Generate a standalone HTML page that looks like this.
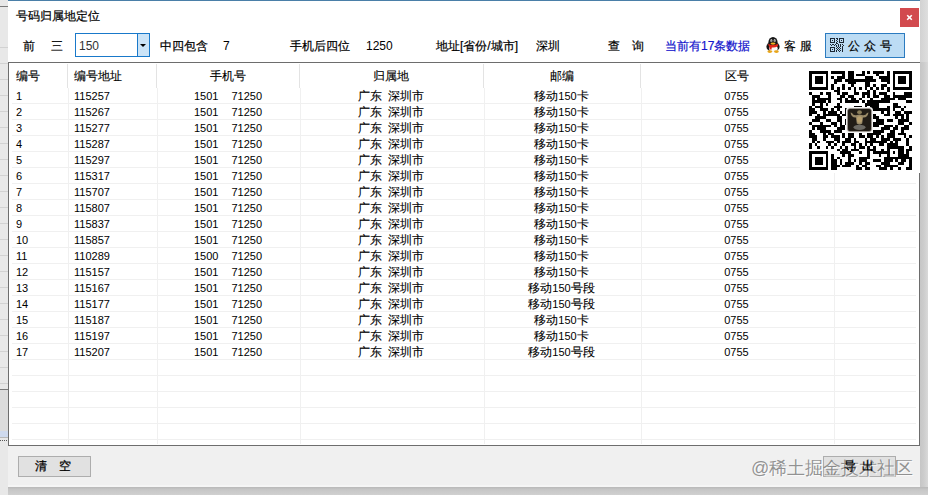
<!DOCTYPE html>
<html><head><meta charset="utf-8"><style>
*{margin:0;padding:0;box-sizing:border-box}
html,body{width:928px;height:495px;overflow:hidden;background:#e6e6e6;font-family:"Liberation Sans",sans-serif;color:#000}
.abs{position:absolute}
#strip{position:absolute;left:0;top:0;width:8px;height:495px;background:#e8e8e8}
#shadowR{position:absolute;left:920px;top:0;width:8px;height:495px;background:linear-gradient(to right,#c6c6c6,#cdcdcd 50%,#d9d9d9)}
#shadowRT{position:absolute;left:920px;top:0;width:8px;height:62px;background:linear-gradient(to right,#d2d2d2,#dedede)}
#shadowB{position:absolute;left:8px;top:487px;width:920px;height:8px;background:linear-gradient(to bottom,#b8b8b8,#c6c6c6 30%,#d0d0d0)}
#bband{position:absolute;left:8px;top:485px;width:912px;height:2px;background:#f5f5f5}
#win{position:absolute;left:8px;top:0;width:912px;height:487px;background:#f0f0f0}
#topw{position:absolute;left:8px;top:0;width:912px;height:62px;background:#fff;border-top:1px solid #4a7fa8}
.t{position:absolute;font-size:12px;line-height:14px;white-space:nowrap;-webkit-text-stroke:0.2px currentColor}
#table{position:absolute;left:8px;top:62px;width:912px;height:384px;background:#fff;border:1px solid #6d6d6d}
.hl{position:absolute;left:12px;width:904px;height:1px;background:#f0f0f0}
.vl{position:absolute;width:1px;background:#f0f0f0;top:88px;height:356px}
.hv{position:absolute;width:1px;background:#e3e3e3;top:64px;height:24px}
.h{position:absolute;top:69px;font-size:12px;line-height:14px;white-space:nowrap;-webkit-text-stroke:0.12px #000}
.r{position:absolute;left:0;width:928px;height:16px;font-size:11px;line-height:16px;white-space:nowrap}
.r span{position:absolute;top:0}
.c0{left:16px} .c1{left:74px}
.c2{left:157px;width:142px;text-align:center} .c2 i{display:inline-block;width:13px}
.c3{left:299px;width:184px;text-align:center;font-size:12px;-webkit-text-stroke:0.1px #000} .c3 b{display:inline-block;width:6px} .c4 em{font-style:normal;font-size:11px}
.c4{left:483px;width:157px;text-align:center;font-size:12px;-webkit-text-stroke:0.1px #000} .c4 em{-webkit-text-stroke:0}
.c5{left:640px;width:193px;text-align:center}
.btn{position:absolute;background:#e1e1e1;border:1px solid #adadad;font-size:12px;line-height:19px;text-align:center;-webkit-text-stroke:0.25px #000}
</style></head><body>
<div id="strip"></div>
<div class="abs" style="left:0;top:47px;width:8px;height:1px;background:#d2d2d2"></div><div class="abs" style="left:0;top:63px;width:8px;height:1px;background:#d2d2d2"></div><div class="abs" style="left:0;top:79px;width:8px;height:1px;background:#d2d2d2"></div><div class="abs" style="left:0;top:95px;width:8px;height:1px;background:#d2d2d2"></div><div class="abs" style="left:0;top:111px;width:8px;height:1px;background:#d2d2d2"></div><div class="abs" style="left:0;top:127px;width:8px;height:1px;background:#d2d2d2"></div><div class="abs" style="left:0;top:143px;width:8px;height:1px;background:#d2d2d2"></div><div class="abs" style="left:0;top:159px;width:8px;height:1px;background:#d2d2d2"></div><div class="abs" style="left:0;top:175px;width:8px;height:1px;background:#d2d2d2"></div><div class="abs" style="left:0;top:191px;width:8px;height:1px;background:#d2d2d2"></div><div class="abs" style="left:0;top:207px;width:8px;height:1px;background:#d2d2d2"></div><div class="abs" style="left:0;top:223px;width:8px;height:1px;background:#d2d2d2"></div><div class="abs" style="left:0;top:239px;width:8px;height:1px;background:#d2d2d2"></div><div class="abs" style="left:0;top:255px;width:8px;height:1px;background:#d2d2d2"></div><div class="abs" style="left:0;top:271px;width:8px;height:1px;background:#d2d2d2"></div><div class="abs" style="left:0;top:287px;width:8px;height:1px;background:#d2d2d2"></div><div class="abs" style="left:0;top:303px;width:8px;height:1px;background:#d2d2d2"></div><div class="abs" style="left:0;top:319px;width:8px;height:1px;background:#d2d2d2"></div><div class="abs" style="left:0;top:335px;width:8px;height:1px;background:#d2d2d2"></div><div class="abs" style="left:0;top:351px;width:8px;height:1px;background:#d2d2d2"></div><div class="abs" style="left:0;top:367px;width:8px;height:1px;background:#d2d2d2"></div><div class="abs" style="left:0;top:383px;width:8px;height:1px;background:#d2d2d2"></div><div class="abs" style="left:0;top:6px;width:8px;height:1px;background:#7a7a7a"></div><div class="abs" style="left:0;top:389px;width:8px;height:1px;background:#7a7a7a"></div><div class="abs" style="left:0;top:390px;width:8px;height:41px;background:#dcdcdc"></div>
<div class="abs" style="left:0;top:431px;width:8px;height:6px;background:#cfdaee"></div><div class="abs" style="left:0;top:437px;width:8px;height:1px;background:#b8b8b8"></div>
<div class="abs" style="left:0;top:440px;width:8px;height:1px;background:repeating-linear-gradient(to right,#555 0 1px,transparent 1px 2px)"></div>
<div id="shadowR"></div><div id="shadowRT"></div>
<div id="shadowB"></div>
<div id="win"></div><div id="bband"></div>
<div id="topw"></div>
<div class="t" style="left:16px;top:9px">号码归属地定位</div>
<div class="abs" style="left:900px;top:8px;width:19px;height:19px;background:#d24a4e"></div><svg class="abs" style="left:906px;top:14px" width="7" height="7" viewBox="0 0 7 7"><path d="M1.2 1.2L5.8 5.8M5.8 1.2L1.2 5.8" stroke="#fff" stroke-width="1.6"/></svg>
<div class="t" style="left:23px;top:39px">前</div>
<div class="t" style="left:51px;top:39px">三</div>
<div class="abs" style="left:75px;top:33px;width:75px;height:24px;border:1px solid #1979ca;background:#fff"></div>
<div class="t" style="left:79px;top:39px;color:#333;-webkit-text-stroke:0">150</div>
<div class="abs" style="left:137px;top:34px;width:12px;height:22px;background:#cce4f7;border-left:1px solid #1979ca"></div>
<div class="abs" style="left:140px;top:44px;width:0;height:0;border-left:3px solid transparent;border-right:3px solid transparent;border-top:3px solid #000"></div>
<div class="t" style="left:160px;top:39px">中四包含</div>
<div class="t" style="left:223px;top:39px;-webkit-text-stroke:0">7</div>
<div class="t" style="left:290px;top:39px">手机后四位</div>
<div class="t" style="left:366px;top:39px;-webkit-text-stroke:0">1250</div>
<div class="t" style="left:436px;top:39px">地址[省份/城市]</div>
<div class="t" style="left:536px;top:39px">深圳</div>
<div class="t" style="left:608px;top:39px;letter-spacing:12px">查询</div>
<div class="t" style="left:665px;top:39px;color:#1414cc">当前有17条数据</div>
<svg class="abs" style="left:766px;top:37px" width="14" height="16" viewBox="0 0 14 16"><ellipse cx="7" cy="9.8" rx="6.6" ry="5" fill="#161616"/><ellipse cx="7" cy="5.2" rx="4.6" ry="5.2" fill="#161616"/><ellipse cx="5.4" cy="3.7" rx="1" ry="1.4" fill="#f4f4f4"/><ellipse cx="8.6" cy="3.7" rx="1" ry="1.4" fill="#f4f4f4"/><ellipse cx="5.7" cy="4" rx="0.45" ry="0.7" fill="#222"/><ellipse cx="8.3" cy="4" rx="0.45" ry="0.7" fill="#222"/><ellipse cx="7.4" cy="11.6" rx="4.3" ry="3.4" fill="#fafafa"/><path d="M2.2 6.8 Q7 9.4 11.8 6.8 L12 9.2 Q8.5 11 5.8 10.4 L5.4 12.8 L3.6 12.2 L3.4 9.8 Q2.4 9 2.2 6.8z" fill="#e0261a"/><ellipse cx="7" cy="6.6" rx="2.5" ry="1.1" fill="#f0b020"/><ellipse cx="3.8" cy="14.6" rx="2.4" ry="1.3" fill="#e9a619"/><ellipse cx="10.4" cy="14.6" rx="2.4" ry="1.3" fill="#e9a619"/></svg>
<div class="t" style="left:784px;top:39px;letter-spacing:4px">客服</div>
<div class="abs" style="left:825px;top:33px;width:80px;height:25px;border:1px solid #2b7bc0;background:#bcdcf4"></div>
<svg class="abs" style="left:830px;top:38px" width="14" height="14" viewBox="0 0 14 14" shape-rendering="crispEdges"><path d="M0 0h1v1h-1zM1 0h1v1h-1zM2 0h1v1h-1zM3 0h1v1h-1zM4 0h1v1h-1zM6 0h1v1h-1zM7 0h1v1h-1zM9 0h1v1h-1zM10 0h1v1h-1zM11 0h1v1h-1zM12 0h1v1h-1zM13 0h1v1h-1zM0 1h1v1h-1zM4 1h1v1h-1zM7 1h1v1h-1zM9 1h1v1h-1zM13 1h1v1h-1zM0 2h1v1h-1zM2 2h1v1h-1zM4 2h1v1h-1zM6 2h1v1h-1zM9 2h1v1h-1zM11 2h1v1h-1zM13 2h1v1h-1zM0 3h1v1h-1zM4 3h1v1h-1zM7 3h1v1h-1zM9 3h1v1h-1zM13 3h1v1h-1zM0 4h1v1h-1zM1 4h1v1h-1zM2 4h1v1h-1zM3 4h1v1h-1zM4 4h1v1h-1zM6 4h1v1h-1zM9 4h1v1h-1zM10 4h1v1h-1zM11 4h1v1h-1zM12 4h1v1h-1zM13 4h1v1h-1zM6 5h1v1h-1zM7 5h1v1h-1zM0 6h1v1h-1zM2 6h1v1h-1zM3 6h1v1h-1zM5 6h1v1h-1zM8 6h1v1h-1zM10 6h1v1h-1zM12 6h1v1h-1zM1 7h1v1h-1zM4 7h1v1h-1zM6 7h1v1h-1zM8 7h1v1h-1zM10 7h1v1h-1zM13 7h1v1h-1zM6 8h1v1h-1zM8 8h1v1h-1zM10 8h1v1h-1zM12 8h1v1h-1zM0 9h1v1h-1zM1 9h1v1h-1zM2 9h1v1h-1zM3 9h1v1h-1zM4 9h1v1h-1zM7 9h1v1h-1zM9 9h1v1h-1zM12 9h1v1h-1zM0 10h1v1h-1zM4 10h1v1h-1zM6 10h1v1h-1zM8 10h1v1h-1zM10 10h1v1h-1zM12 10h1v1h-1zM0 11h1v1h-1zM2 11h1v1h-1zM4 11h1v1h-1zM7 11h1v1h-1zM9 11h1v1h-1zM12 11h1v1h-1zM0 12h1v1h-1zM4 12h1v1h-1zM6 12h1v1h-1zM8 12h1v1h-1zM10 12h1v1h-1zM12 12h1v1h-1zM0 13h1v1h-1zM1 13h1v1h-1zM2 13h1v1h-1zM3 13h1v1h-1zM4 13h1v1h-1zM6 13h1v1h-1zM9 13h1v1h-1zM12 13h1v1h-1z" fill="#1c2733"/></svg>
<div class="t" style="left:848px;top:39px;letter-spacing:4px">公众号</div>
<div id="table"></div>
<div class="hl" style="top:103px"></div><div class="hl" style="top:119px"></div><div class="hl" style="top:135px"></div><div class="hl" style="top:151px"></div><div class="hl" style="top:167px"></div><div class="hl" style="top:183px"></div><div class="hl" style="top:199px"></div><div class="hl" style="top:215px"></div><div class="hl" style="top:231px"></div><div class="hl" style="top:247px"></div><div class="hl" style="top:263px"></div><div class="hl" style="top:279px"></div><div class="hl" style="top:295px"></div><div class="hl" style="top:311px"></div><div class="hl" style="top:327px"></div><div class="hl" style="top:343px"></div><div class="hl" style="top:359px"></div><div class="hl" style="top:375px"></div><div class="hl" style="top:391px"></div><div class="hl" style="top:407px"></div><div class="hl" style="top:423px"></div><div class="hl" style="top:439px"></div>
<div class="hv" style="left:67px"></div><div class="hv" style="left:156px"></div><div class="hv" style="left:299px"></div><div class="hv" style="left:483px"></div><div class="hv" style="left:640px"></div><div class="hv" style="left:833px"></div>
<div class="vl" style="left:68px"></div><div class="vl" style="left:157px"></div><div class="vl" style="left:300px"></div><div class="vl" style="left:484px"></div><div class="vl" style="left:641px"></div><div class="vl" style="left:834px"></div>
<div class="h" style="left:16px">编号</div>
<div class="h" style="left:74px">编号地址</div>
<div class="h" style="left:157px;width:142px;text-align:center">手机号</div>
<div class="h" style="left:299px;width:184px;text-align:center">归属地</div>
<div class="h" style="left:483px;width:157px;text-align:center">邮编</div>
<div class="h" style="left:640px;width:193px;text-align:center">区号</div>
<div class="r" style="top:88px"><span class="c0">1</span><span class="c1">115257</span><span class="c2">1501<i></i>71250</span><span class="c3">广东<b></b>深圳市</span><span class="c4">移动<em>150</em>卡</span><span class="c5">0755</span></div><div class="r" style="top:104px"><span class="c0">2</span><span class="c1">115267</span><span class="c2">1501<i></i>71250</span><span class="c3">广东<b></b>深圳市</span><span class="c4">移动<em>150</em>卡</span><span class="c5">0755</span></div><div class="r" style="top:120px"><span class="c0">3</span><span class="c1">115277</span><span class="c2">1501<i></i>71250</span><span class="c3">广东<b></b>深圳市</span><span class="c4">移动<em>150</em>卡</span><span class="c5">0755</span></div><div class="r" style="top:136px"><span class="c0">4</span><span class="c1">115287</span><span class="c2">1501<i></i>71250</span><span class="c3">广东<b></b>深圳市</span><span class="c4">移动<em>150</em>卡</span><span class="c5">0755</span></div><div class="r" style="top:152px"><span class="c0">5</span><span class="c1">115297</span><span class="c2">1501<i></i>71250</span><span class="c3">广东<b></b>深圳市</span><span class="c4">移动<em>150</em>卡</span><span class="c5">0755</span></div><div class="r" style="top:168px"><span class="c0">6</span><span class="c1">115317</span><span class="c2">1501<i></i>71250</span><span class="c3">广东<b></b>深圳市</span><span class="c4">移动<em>150</em>卡</span><span class="c5">0755</span></div><div class="r" style="top:184px"><span class="c0">7</span><span class="c1">115707</span><span class="c2">1501<i></i>71250</span><span class="c3">广东<b></b>深圳市</span><span class="c4">移动<em>150</em>卡</span><span class="c5">0755</span></div><div class="r" style="top:200px"><span class="c0">8</span><span class="c1">115807</span><span class="c2">1501<i></i>71250</span><span class="c3">广东<b></b>深圳市</span><span class="c4">移动<em>150</em>卡</span><span class="c5">0755</span></div><div class="r" style="top:216px"><span class="c0">9</span><span class="c1">115837</span><span class="c2">1501<i></i>71250</span><span class="c3">广东<b></b>深圳市</span><span class="c4">移动<em>150</em>卡</span><span class="c5">0755</span></div><div class="r" style="top:232px"><span class="c0">10</span><span class="c1">115857</span><span class="c2">1501<i></i>71250</span><span class="c3">广东<b></b>深圳市</span><span class="c4">移动<em>150</em>卡</span><span class="c5">0755</span></div><div class="r" style="top:248px"><span class="c0">11</span><span class="c1">110289</span><span class="c2">1500<i></i>71250</span><span class="c3">广东<b></b>深圳市</span><span class="c4">移动<em>150</em>卡</span><span class="c5">0755</span></div><div class="r" style="top:264px"><span class="c0">12</span><span class="c1">115157</span><span class="c2">1501<i></i>71250</span><span class="c3">广东<b></b>深圳市</span><span class="c4">移动<em>150</em>卡</span><span class="c5">0755</span></div><div class="r" style="top:280px"><span class="c0">13</span><span class="c1">115167</span><span class="c2">1501<i></i>71250</span><span class="c3">广东<b></b>深圳市</span><span class="c4">移动<em>150</em>号段</span><span class="c5">0755</span></div><div class="r" style="top:296px"><span class="c0">14</span><span class="c1">115177</span><span class="c2">1501<i></i>71250</span><span class="c3">广东<b></b>深圳市</span><span class="c4">移动<em>150</em>号段</span><span class="c5">0755</span></div><div class="r" style="top:312px"><span class="c0">15</span><span class="c1">115187</span><span class="c2">1501<i></i>71250</span><span class="c3">广东<b></b>深圳市</span><span class="c4">移动<em>150</em>卡</span><span class="c5">0755</span></div><div class="r" style="top:328px"><span class="c0">16</span><span class="c1">115197</span><span class="c2">1501<i></i>71250</span><span class="c3">广东<b></b>深圳市</span><span class="c4">移动<em>150</em>卡</span><span class="c5">0755</span></div><div class="r" style="top:344px"><span class="c0">17</span><span class="c1">115207</span><span class="c2">1501<i></i>71250</span><span class="c3">广东<b></b>深圳市</span><span class="c4">移动<em>150</em>号段</span><span class="c5">0755</span></div>
<div class="abs" style="left:800px;top:63px;width:120px;height:110px;background:#fff"></div>
<svg class="abs" style="left:809px;top:71px" width="103" height="99" viewBox="0 0 37 37" preserveAspectRatio="none" shape-rendering="crispEdges"><path d="M0 0h7v1h-7zM8 0h5v1h-5zM14 0h2v1h-2zM19 0h1v1h-1zM21 0h1v1h-1zM23 0h4v1h-4zM28 0h1v1h-1zM30 0h7v1h-7zM0 1h1v1h-1zM6 1h1v1h-1zM12 1h1v1h-1zM14 1h2v1h-2zM17 1h3v1h-3zM24 1h1v1h-1zM28 1h1v1h-1zM30 1h1v1h-1zM36 1h1v1h-1zM0 2h1v1h-1zM2 2h3v1h-3zM6 2h1v1h-1zM8 2h1v1h-1zM10 2h3v1h-3zM14 2h2v1h-2zM20 2h3v1h-3zM25 2h4v1h-4zM30 2h1v1h-1zM32 2h3v1h-3zM36 2h1v1h-1zM0 3h1v1h-1zM2 3h3v1h-3zM6 3h1v1h-1zM9 3h3v1h-3zM13 3h11v1h-11zM26 3h3v1h-3zM30 3h1v1h-1zM32 3h3v1h-3zM36 3h1v1h-1zM0 4h1v1h-1zM2 4h3v1h-3zM6 4h1v1h-1zM9 4h1v1h-1zM14 4h3v1h-3zM20 4h2v1h-2zM28 4h1v1h-1zM30 4h1v1h-1zM32 4h3v1h-3zM36 4h1v1h-1zM0 5h1v1h-1zM6 5h1v1h-1zM8 5h1v1h-1zM12 5h1v1h-1zM15 5h1v1h-1zM20 5h2v1h-2zM23 5h1v1h-1zM26 5h2v1h-2zM30 5h1v1h-1zM36 5h1v1h-1zM0 6h7v1h-7zM8 6h1v1h-1zM10 6h1v1h-1zM12 6h1v1h-1zM14 6h1v1h-1zM16 6h1v1h-1zM18 6h1v1h-1zM20 6h1v1h-1zM22 6h1v1h-1zM24 6h1v1h-1zM26 6h1v1h-1zM28 6h1v1h-1zM30 6h7v1h-7zM9 7h2v1h-2zM16 7h1v1h-1zM21 7h1v1h-1zM23 7h1v1h-1zM28 7h1v1h-1zM0 8h1v1h-1zM4 8h1v1h-1zM6 8h2v1h-2zM10 8h1v1h-1zM12 8h2v1h-2zM16 8h2v1h-2zM19 8h3v1h-3zM23 8h1v1h-1zM25 8h3v1h-3zM30 8h1v1h-1zM34 8h3v1h-3zM1 9h3v1h-3zM7 9h1v1h-1zM11 9h2v1h-2zM14 9h2v1h-2zM19 9h1v1h-1zM21 9h1v1h-1zM23 9h2v1h-2zM27 9h2v1h-2zM30 9h7v1h-7zM1 10h1v1h-1zM3 10h5v1h-5zM10 10h2v1h-2zM13 10h1v1h-1zM15 10h2v1h-2zM18 10h1v1h-1zM22 10h1v1h-1zM26 10h5v1h-5zM32 10h3v1h-3zM1 11h5v1h-5zM7 11h1v1h-1zM11 11h1v1h-1zM13 11h5v1h-5zM19 11h1v1h-1zM21 11h8v1h-8zM35 11h2v1h-2zM1 12h1v1h-1zM4 12h1v1h-1zM6 12h1v1h-1zM10 12h1v1h-1zM20 12h5v1h-5zM30 12h2v1h-2zM0 13h1v1h-1zM2 13h3v1h-3zM9 13h3v1h-3zM16 13h3v1h-3zM20 13h1v1h-1zM22 13h3v1h-3zM28 13h1v1h-1zM30 13h3v1h-3zM34 13h1v1h-1zM0 14h2v1h-2zM4 14h3v1h-3zM8 14h1v1h-1zM10 14h1v1h-1zM13 14h1v1h-1zM18 14h1v1h-1zM20 14h9v1h-9zM30 14h1v1h-1zM33 14h1v1h-1zM0 15h3v1h-3zM5 15h1v1h-1zM7 15h3v1h-3zM11 15h1v1h-1zM13 15h2v1h-2zM16 15h2v1h-2zM26 15h1v1h-1zM28 15h1v1h-1zM31 15h2v1h-2zM34 15h3v1h-3zM0 16h1v1h-1zM3 16h1v1h-1zM5 16h6v1h-6zM12 16h2v1h-2zM16 16h8v1h-8zM27 16h2v1h-2zM30 16h4v1h-4zM35 16h1v1h-1zM2 17h4v1h-4zM10 17h2v1h-2zM14 17h1v1h-1zM16 17h2v1h-2zM22 17h3v1h-3zM31 17h1v1h-1zM33 17h1v1h-1zM35 17h1v1h-1zM1 18h3v1h-3zM6 18h2v1h-2zM10 18h2v1h-2zM13 18h3v1h-3zM19 18h3v1h-3zM24 18h3v1h-3zM28 18h2v1h-2zM32 18h4v1h-4zM0 19h1v1h-1zM4 19h1v1h-1zM8 19h2v1h-2zM11 19h1v1h-1zM13 19h4v1h-4zM19 19h3v1h-3zM23 19h4v1h-4zM32 19h2v1h-2zM36 19h1v1h-1zM1 20h7v1h-7zM9 20h1v1h-1zM11 20h2v1h-2zM15 20h4v1h-4zM20 20h2v1h-2zM23 20h2v1h-2zM27 20h3v1h-3zM31 20h1v1h-1zM34 20h2v1h-2zM1 21h1v1h-1zM3 21h3v1h-3zM10 21h3v1h-3zM15 21h4v1h-4zM20 21h1v1h-1zM26 21h3v1h-3zM30 21h2v1h-2zM33 21h3v1h-3zM0 22h1v1h-1zM4 22h4v1h-4zM9 22h3v1h-3zM17 22h1v1h-1zM19 22h1v1h-1zM21 22h1v1h-1zM23 22h4v1h-4zM29 22h2v1h-2zM33 22h1v1h-1zM0 23h2v1h-2zM5 23h1v1h-1zM7 23h2v1h-2zM12 23h1v1h-1zM14 23h2v1h-2zM18 23h1v1h-1zM21 23h5v1h-5zM28 23h3v1h-3zM32 23h3v1h-3zM0 24h3v1h-3zM5 24h2v1h-2zM8 24h3v1h-3zM12 24h1v1h-1zM14 24h2v1h-2zM18 24h2v1h-2zM21 24h2v1h-2zM24 24h1v1h-1zM26 24h1v1h-1zM28 24h3v1h-3zM34 24h1v1h-1zM36 24h1v1h-1zM1 25h2v1h-2zM5 25h1v1h-1zM9 25h2v1h-2zM13 25h2v1h-2zM16 25h1v1h-1zM20 25h1v1h-1zM22 25h2v1h-2zM26 25h3v1h-3zM30 25h3v1h-3zM35 25h1v1h-1zM1 26h1v1h-1zM3 26h1v1h-1zM6 26h3v1h-3zM10 26h1v1h-1zM12 26h3v1h-3zM16 26h2v1h-2zM20 26h8v1h-8zM29 26h1v1h-1zM31 26h1v1h-1zM35 26h1v1h-1zM0 27h1v1h-1zM2 27h1v1h-1zM7 27h1v1h-1zM9 27h1v1h-1zM12 27h1v1h-1zM15 27h2v1h-2zM18 27h1v1h-1zM20 27h1v1h-1zM22 27h1v1h-1zM25 27h2v1h-2zM28 27h4v1h-4zM35 27h1v1h-1zM0 28h1v1h-1zM3 28h1v1h-1zM6 28h1v1h-1zM8 28h1v1h-1zM11 28h1v1h-1zM13 28h1v1h-1zM16 28h1v1h-1zM18 28h2v1h-2zM21 28h1v1h-1zM23 28h1v1h-1zM28 28h6v1h-6zM36 28h1v1h-1zM10 29h1v1h-1zM12 29h2v1h-2zM15 29h3v1h-3zM21 29h3v1h-3zM26 29h1v1h-1zM28 29h1v1h-1zM32 29h2v1h-2zM35 29h2v1h-2zM0 30h7v1h-7zM11 30h4v1h-4zM18 30h1v1h-1zM21 30h1v1h-1zM23 30h6v1h-6zM30 30h1v1h-1zM32 30h2v1h-2zM35 30h1v1h-1zM0 31h1v1h-1zM6 31h1v1h-1zM8 31h1v1h-1zM12 31h1v1h-1zM14 31h2v1h-2zM21 31h1v1h-1zM25 31h1v1h-1zM28 31h1v1h-1zM32 31h4v1h-4zM0 32h1v1h-1zM2 32h3v1h-3zM6 32h1v1h-1zM8 32h1v1h-1zM10 32h1v1h-1zM14 32h1v1h-1zM18 32h4v1h-4zM27 32h10v1h-10zM0 33h1v1h-1zM2 33h3v1h-3zM6 33h1v1h-1zM8 33h2v1h-2zM11 33h1v1h-1zM14 33h1v1h-1zM16 33h1v1h-1zM18 33h3v1h-3zM23 33h3v1h-3zM27 33h3v1h-3zM31 33h1v1h-1zM33 33h2v1h-2zM36 33h1v1h-1zM0 34h1v1h-1zM2 34h3v1h-3zM6 34h1v1h-1zM8 34h2v1h-2zM11 34h1v1h-1zM13 34h3v1h-3zM18 34h1v1h-1zM20 34h2v1h-2zM26 34h3v1h-3zM32 34h2v1h-2zM36 34h1v1h-1zM0 35h1v1h-1zM6 35h1v1h-1zM8 35h3v1h-3zM12 35h3v1h-3zM17 35h1v1h-1zM19 35h2v1h-2zM24 35h2v1h-2zM27 35h5v1h-5zM36 35h1v1h-1zM0 36h7v1h-7zM8 36h2v1h-2zM17 36h2v1h-2zM20 36h2v1h-2zM25 36h3v1h-3zM29 36h1v1h-1zM32 36h1v1h-1zM35 36h2v1h-2z" fill="#000"/></svg>
<svg class="abs" style="left:846px;top:107px" width="27" height="26" viewBox="0 0 27 26"><rect x="0" y="0" width="27" height="26" rx="3.5" fill="#f2f2f2"/><rect x="1.5" y="1.5" width="24" height="23" rx="2.5" fill="#221d17" stroke="#a9a49c" stroke-width="0.6"/><ellipse cx="13.5" cy="5.2" rx="2.4" ry="1.9" fill="#8a7d5a"/><path d="M4.5 5.5 Q5.5 11 10 10.5 L10.8 16.5 Q13.5 18.5 16.2 16.5 L17 10.5 Q21.5 11 22.5 5.5 L21 6 Q19.5 8.8 16 8 Q13.5 7 11 8 Q7.5 8.8 6 6z" fill="#9a8a68"/><ellipse cx="13.5" cy="12.5" rx="2.6" ry="3.2" fill="#b8a070"/><ellipse cx="13.5" cy="20.3" rx="6" ry="2.6" fill="#6d6a64"/></svg>
<div class="btn" style="left:18px;top:456px;width:73px;height:21px;letter-spacing:12px;padding-left:9px">清空</div>
<div class="btn" style="left:823px;top:456px;width:73px;height:21px;background:#e1e1e1"></div>
<div class="t" style="left:751px;top:457px;font-size:18px;line-height:22px;color:rgba(80,80,80,0.6);-webkit-text-stroke:0;text-shadow:1px 1px 0 rgba(255,255,255,0.7)">@稀土掘金技术社区</div><div class="t" style="left:844px;top:459px;letter-spacing:6px;-webkit-text-stroke:0.25px #000">导出</div>

</body></html>
